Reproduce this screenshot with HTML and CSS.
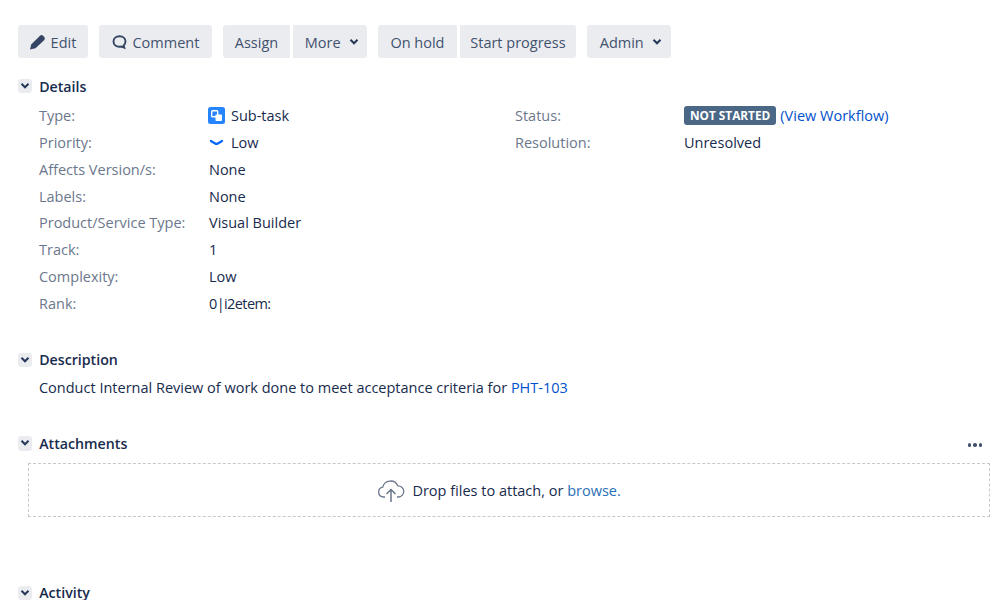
FILE: index.html
```html
<!DOCTYPE html>
<html lang="en">
<head>
<meta charset="utf-8">
<title>PHT sub-task</title>
<link rel="stylesheet" href="styles.css">
</head>
<body>
<div class="toolbar">
  <div class="group"><a class="btn btn-edit"><svg class="ico" width="18" height="16" viewBox="0 0 18 16"><path d="M1 15.500L2.200 10.500 11 1.700Q12.500.5 14 1.700L15.300 3Q16.500 4.500 15.300 6L6.500 14.300Z" fill="#344563"/></svg>Edit</a></div>
  <div class="group"><a class="btn btn-comment"><svg class="ico" width="17" height="16" viewBox="0 0 16 16"><path d="M8 2.200c3.400 0 6 2.300 6 5.300 0 1.600-.7 3-1.900 3.900l.7 2.300-3-1.200c-.6.1-1.200.2-1.800.2-3.400 0-6-2.200-6-5.200s2.600-5.300 6-5.300z" fill="none" stroke="#344563" stroke-width="1.900"/></svg>Comment</a></div>
  <div class="group"><a class="btn btn-assign">Assign</a><a class="btn btn-more">More<svg class="chev" width="10" height="8" viewBox="0 0 10 8"><path d="M1.500 1.800L5 5.300l3.500-3.500" fill="none" stroke="#253858" stroke-width="2"/></svg></a></div>
  <div class="group"><a class="btn btn-hold">On hold</a><a class="btn btn-start">Start progress</a></div>
  <div class="group"><a class="btn btn-admin">Admin<svg class="chev" width="10" height="8" viewBox="0 0 10 8"><path d="M1.500 1.800L5 5.300l3.500-3.500" fill="none" stroke="#253858" stroke-width="2"/></svg></a></div>
</div>

<section class="mod-details">
  <h4 class="head"><span class="toggle"><svg width="10" height="8" viewBox="0 0 10 8"><path d="M1.500 1.800L5 5.300l3.500-3.500" fill="none" stroke="#253858" stroke-width="2"/></svg></span>Details</h4>
  <div class="details">
    <dl class="col col-left">
      <dt>Type:</dt><dd><svg class="type-ico" width="17" height="17" viewBox="0 0 17 17"><rect width="17" height="17" rx="2.500" fill="#2684ff"/><rect x="3.700" y="3.700" width="6" height="6" rx=".8" fill="none" stroke="#fff" stroke-width="1.400"/><rect x="7.500" y="7.500" width="6.500" height="6.500" rx=".8" fill="#fff"/></svg>Sub-task</dd>
      <dt>Priority:</dt><dd><svg class="type-ico" width="17" height="17" viewBox="0 0 17 17"><path d="M3 7c2.500 1.700 4.300 2.900 5.500 2.900S11.500 8.700 14 7" fill="none" stroke="#0065ff" stroke-width="2.300" stroke-linecap="round"/></svg>Low</dd>
      <dt>Affects Version/s:</dt><dd>None</dd>
      <dt>Labels:</dt><dd>None</dd>
      <dt>Product/Service Type:</dt><dd>Visual Builder</dd>
      <dt>Track:</dt><dd>1</dd>
      <dt>Complexity:</dt><dd>Low</dd>
      <dt>Rank:</dt><dd class="rank">0|i2etem:</dd>
    </dl>
    <dl class="col col-right">
      <dt>Status:</dt><dd><span class="lozenge">NOT STARTED</span><a class="link">(View Workflow)</a></dd>
      <dt>Resolution:</dt><dd>Unresolved</dd>
    </dl>
  </div>
</section>

<section class="mod-desc">
  <h4 class="head"><span class="toggle"><svg width="10" height="8" viewBox="0 0 10 8"><path d="M1.500 1.800L5 5.300l3.500-3.500" fill="none" stroke="#253858" stroke-width="2"/></svg></span>Description</h4>
  <p class="desc">Conduct Internal Review of work done to meet acceptance criteria for <a class="link">PHT-103</a></p>
</section>

<section class="mod-attach">
  <h4 class="head"><span class="toggle"><svg width="10" height="8" viewBox="0 0 10 8"><path d="M1.500 1.800L5 5.300l3.500-3.500" fill="none" stroke="#253858" stroke-width="2"/></svg></span>Attachments<span class="dots"><i></i><i></i><i></i></span></h4>
  <div class="drop"><svg class="cloud" width="28" height="24" viewBox="0 0 28 24"><path d="M8 18H6.500a5 5 0 0 1-.8-9.900A8 8 0 0 1 20.800 6.800 5.600 5.600 0 0 1 21.500 18H20" fill="none" stroke="#6b778c" stroke-width="1.300"/><path d="M14 23V11M9.500 15l4.500-4.500 4.500 4.500" fill="none" stroke="#6b778c" stroke-width="1.500"/></svg><span>Drop files to attach, or <a class="browse">browse.</a></span></div>
</section>

<section class="mod-activity">
  <h4 class="head"><span class="toggle"><svg width="10" height="8" viewBox="0 0 10 8"><path d="M1.500 1.800L5 5.300l3.500-3.500" fill="none" stroke="#253858" stroke-width="2"/></svg></span>Activity</h4>
</section>
</body>
</html>
```

FILE: styles.css
```css
html, body { margin: 0; padding: 0; }
body {
  width: 999px;
  height: 600px;
  overflow: hidden;
  background: #fff;
  color: #172b4d;
  font-family: "Open Sans", "Noto Sans", sans-serif;
  font-size: 14.5px;
  box-sizing: border-box;
  padding: 25px 9px 0 17.7px;
}
.toolbar { display: flex; gap: 10.8px; height: 33px; }
.group { display: flex; gap: 2.6px; }
.btn {
  display: flex;
  align-items: center;
  justify-content: center;
  height: 33px;
  padding-top: 1px;
  background: #ebecf0;
  color: #42526e;
  border-radius: 3px;
  box-sizing: border-box;
  font-size: 14.5px;
}
.group .btn:first-child:not(:last-child) { border-radius: 3px 0 0 3px; }
.group .btn:last-child:not(:first-child) { border-radius: 0 3px 3px 0; }
.btn-edit { width: 70.6px; padding-right: 1px; }
.btn-comment { width: 112.7px; }
.btn-assign { width: 67.8px; }
.btn-more { width: 73.8px; justify-content: flex-start; padding-left: 11.8px; }
.btn-hold { width: 79.8px; }
.btn-start { width: 116px; }
.btn-admin { width: 84.3px; justify-content: flex-start; padding-left: 13px; }
.ico { margin-right: 4px; }
.chev { margin-left: 8px; }
.head {
  display: flex;
  align-items: center;
  margin: 0;
  height: 20px;
  font-size: 14.2px;
  font-weight: 600;
  color: #172b4d;
}
.toggle {
  display: flex;
  align-items: center;
  justify-content: center;
  width: 14.5px;
  height: 14.5px;
  margin-right: 7px;
  background: #ebecf0;
  border-radius: 3px;
}
.mod-details { margin-top: 18px; }
.details { display: flex; margin-top: 6.4px; padding-left: 21.3px; }
.col { display: grid; margin: 0; grid-auto-rows: 26.8px; align-items: center; }
.col-left { width: 476px; grid-template-columns: 170px 1fr; }
.col-right { grid-template-columns: 169px 1fr; align-self: flex-start; }
dt { color: #6b778c; }
dd { margin: 0; color: #172b4d; display: flex; align-items: center; white-space: nowrap; }
.rank { letter-spacing: -0.6px; }
.type-ico { margin: 0 6px 0 -1px; flex: none; }
.link { color: #0052cc; }
.lozenge {
  display: block;
  background: #4a6785;
  color: #fff;
  font-size: 11.8px;
  font-weight: 700;
  line-height: 18.6px;
  height: 18.6px;
  padding: 0 6px;
  border-radius: 3px;
  margin-right: 4px;
}
.mod-desc { margin-top: 33px; }
.desc { margin: 8px 0 0 21.3px; line-height: 20px; }
.mod-attach { margin-top: 35.5px; }
.dots { margin: 3px 8px 0 auto; display: flex; gap: 2px; }
.dots i { width: 3.5px; height: 3.5px; border-radius: 50%; background: #42526e; display: block; }
.drop {
  display: flex;
  align-items: center;
  justify-content: center;
  margin: 10px 0 0 10.5px;
  height: 54px;
  box-sizing: border-box;
  padding: 1px 20px 0 0;
  border: 1px dashed #c8c8c8;
  color: #172b4d;
}
.cloud { margin-right: 7px; }
.browse { color: #2a6fb5; }
.mod-activity { margin-top: 65.5px; }
```
